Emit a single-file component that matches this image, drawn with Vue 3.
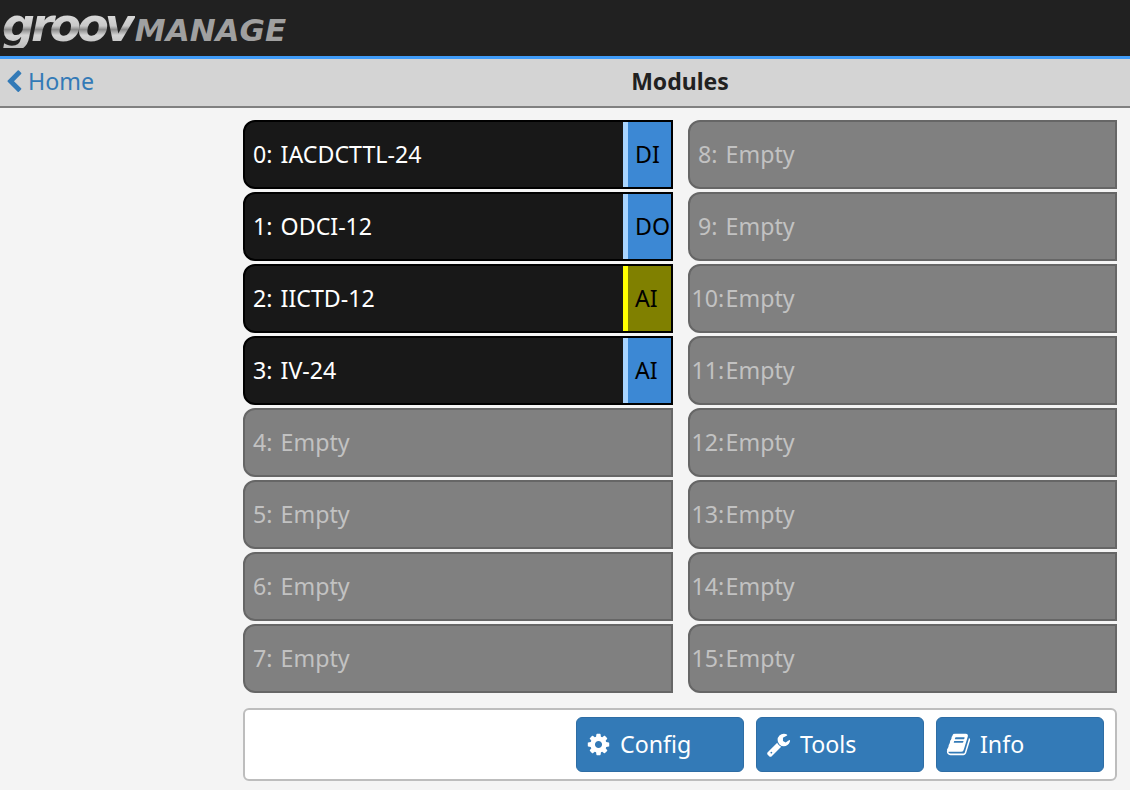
<script setup>
const left = [
  { n: '0:', name: 'IACDCTTL-24', tag: 'DI' },
  { n: '1:', name: 'ODCI-12', tag: 'DO' },
  { n: '2:', name: 'IICTD-12', tag: 'AI', warn: true },
  { n: '3:', name: 'IV-24', tag: 'AI' },
  { n: '4:' }, { n: '5:' }, { n: '6:' }, { n: '7:' }
]
const right = Array.from({ length: 8 }, (_, i) => ({ n: `${i + 8}:` }))
const columns = [left, right]
const cog = 'M1152 896q0-106-75-181t-181-75-181 75-75 181 75 181 181 75 181-75 75-181zm512-109v222q0 12-8 23t-20 13l-185 28q-19 54-39 91 35 50 107 138 10 12 10 25t-9 23q-27 37-99 108t-94 71q-12 0-26-9l-138-108q-44 23-91 38-16 136-29 186-7 28-36 28h-222q-14 0-24.5-8.5t-11.5-21.5l-28-184q-49-16-90-37l-141 107q-10 9-25 9-14 0-25-11-126-114-165-168-7-10-7-23 0-12 8-23 15-21 51-66.5t54-70.5q-27-50-41-99l-183-27q-13-2-21-12.5t-8-23.5v-222q0-12 8-23t19-13l186-28q14-46 39-92-40-57-107-138-10-12-10-24 0-10 9-23 26-36 98.5-107.5t94.5-71.5q13 0 26 10l138 107q44-23 91-38 16-136 29-186 7-28 36-28h222q14 0 24.5 8.5t11.5 21.5l28 184q49 16 90 37l142-107q9-9 24-9 13 0 25 10 129 119 165 170 7 8 7 22 0 12-8 23-15 21-51 66.5t-54 70.5q26 50 41 98l183 28q13 2 21 12.5t8 23.5z'
const wrench = 'M448 1472q0-26-19-45t-45-19-45 19-19 45 19 45 45 19 45-19 19-45zm644-420l-682 682q-37 37-90 37-52 0-91-37l-106-108q-38-36-38-90 0-53 38-91l681-681q39 98 114.5 173.5t173.5 114.5zm634-435q0 39-23 106-47 134-164.5 217.5t-258.5 83.5q-185 0-316.5-131.5t-131.5-316.5 131.5-316.5 316.5-131.5q58 0 121.5 16.5t107.5 46.5q16 11 16 28t-16 28l-293 169v224l193 107q5-3 79-48.5t135.5-81 70.5-35.5q15 0 23.5 10t8.5 25z'
const book = 'M1703 478q40 57 18 129l-275 906q-19 64-76.5 107.5t-122.5 43.5h-923q-77 0-148.5-53.5t-99.5-131.5q-24-67-2-127 0-4 3-27t4-37q1-8-3-21.5t-3-19.5q2-11 8-21t16.5-23.5 16.5-23.5q23-38 45-91.5t30-91.5q3-10 .5-30t-.5-28q3-11 17-28t17-23q21-36 42-92t25-90q1-9-2.5-32t.5-28q4-13 22-30.5t22-22.5q19-26 42.5-84.5t27.5-96.5q1-8-3-25.5t-2-26.5q2-8 9-18t18-23 17-21q8-12 16.5-30.5t15-35 16-36 19.5-32 26.5-23.5 36-11.5 47.5 5.5l-1 3q38-9 51-9h761q74 0 114 56t18 130l-274 906q-36 119-71.5 153.5t-128.5 34.5h-869q-27 0-38 15-11 16-1 43 24 70 144 70h923q29 0 56-15.5t35-41.5l300-987q7-22 5-57 38 15 59 43zm-1064 2q-4 13 2 22.5t20 9.5h608q13 0 25.5-9.5t16.5-22.5l21-64q4-13-2-22.5t-20-9.5h-608q-13 0-25.5 9.5t-16.5 22.5zm-83 256q-4 13 2 22.5t20 9.5h608q13 0 25.5-9.5t16.5-22.5l21-64q4-13-2-22.5t-20-9.5h-608q-13 0-25.5 9.5t-16.5 22.5z'
const buttons = [
  { label: 'Config', d: cog },
  { label: 'Tools', d: wrench },
  { label: 'Info', d: book }
]
</script>

<template>
  <div class="page">
    <header class="top">
      <div class="logo"><span class="groov">groov</span><span class="manage">MANAGE</span></div>
    </header>
    <nav class="nav">
      <a class="home">
        <svg class="chev" viewBox="0 0 1792 1792"><path fill="currentColor" d="M1427 301l-531 531 531 531q19 19 19 45t-19 45l-166 166q-19 19-45 19t-45-19l-742-742q-19-19-19-45t19-45l742-742q19-19 45-19t45 19l166 166q19 19 19 45t-19 45z"/></svg>
        <span class="lift">Home</span>
      </a>
      <h1 class="title lift">Modules</h1>
    </nav>
    <main class="main">
      <div class="grid">
        <div v-for="(col, c) in columns" :key="c" class="col">
          <div v-for="m in col" :key="m.n" class="card" :class="{ on: m.name }">
            <span class="num">{{ m.n }}</span>
            <span class="name">{{ m.name || 'Empty' }}</span>
            <span v-if="m.tag" class="tag" :class="{ warn: m.warn }">{{ m.tag }}</span>
          </div>
        </div>
      </div>
      <div class="bar">
        <button v-for="b in buttons" :key="b.label" class="btn">
          <svg class="ico" viewBox="0 0 1792 1792"><path fill="currentColor" :d="b.d"/></svg>
          <span class="label">{{ b.label }}</span>
        </button>
      </div>
    </main>
  </div>
</template>

<style>
html, body { margin: 0; background: #f4f4f4; }
</style>

<style scoped>
.page {
  width: 1130px;
  height: 790px;
  overflow: hidden;
  background: #f4f4f4;
  font-family: "Noto Sans", "Open Sans", sans-serif;
  font-size: 23.2px;
}
.top {
  height: 56px;
  background: #212121;
  border-bottom: 3px solid #3f9bf8;
  display: flex;
  align-items: center;
  padding-left: 2px;
}
.logo {
  display: flex;
  align-items: baseline;
  font-family: "DejaVu Sans", sans-serif;
  font-style: italic;
  font-weight: 700;
  line-height: 1;
  margin-top: -6px;
}
.groov {
  font-size: 46px;
  letter-spacing: -4px;
  background: linear-gradient(#f0f0f0 0%, #c8c8c8 52%, #8a8a8a 60%, #d4d4d4 72%, #bdbdbd 100%);
  -webkit-background-clip: text;
  background-clip: text;
  color: transparent;
  padding-right: 4px;
}
.manage {
  font-size: 31px;
  color: #a0a0a0;
}
.nav {
  height: 47px;
  background: #d4d4d4;
  border-bottom: 2px solid #808080;
  display: flex;
  align-items: center;
}
.home {
  width: 230px;
  display: flex;
  align-items: center;
  gap: 2px;
  color: #337ab7;
  padding-left: 2px;
  box-sizing: border-box;
}
.chev { width: 24px; height: 24px; margin-bottom: 2px; }
.lift { margin-bottom: 3px; }
.title {
  flex: 1;
  text-align: center;
  margin-top: 0;
  margin-left: 0;
  margin-right: 0;
  font-size: 23px;
  font-weight: 700;
  color: #212121;
}
.main {
  padding: 12px 13px 0 243px;
}
.grid {
  display: grid;
  grid-template-columns: 430px 429px;
  column-gap: 15px;
}
.col {
  display: flex;
  flex-direction: column;
  gap: 3px;
}
.card {
  height: 69px;
  box-sizing: border-box;
  border: 2px solid #666;
  border-radius: 12px 0 0 12px;
  background: #808080;
  color: #c2c2c2;
  display: flex;
  align-items: center;
}
.card.on {
  border-color: #000;
  background: #181818;
  color: #fff;
}
.num {
  width: 35.6px;
  text-align: center;
  flex: none;
  margin-bottom: 2px;
}
.name { flex: 1; margin-bottom: 2px; }
.tag {
  align-self: stretch;
  width: 48px;
  flex: none;
  box-sizing: border-box;
  border-left: 5px solid #a8d4ff;
  background: #3c88d4;
  color: #000;
  display: flex;
  align-items: center;
  padding: 0 0 2px 7px;
  white-space: nowrap;
}
.tag.warn {
  border-left-color: #ff0;
  background: #808000;
}
.bar {
  margin-top: 15px;
  height: 73px;
  box-sizing: border-box;
  border: 2px solid #bdbdbd;
  border-radius: 6px;
  background: #fff;
  display: flex;
  justify-content: flex-end;
  align-items: center;
  gap: 12px;
  padding-right: 11px;
}
.btn {
  width: 168px;
  height: 55px;
  box-sizing: border-box;
  border: 1px solid #2e6da4;
  border-radius: 6px;
  background: #337ab7;
  color: #fff;
  font: inherit;
  display: flex;
  align-items: center;
  gap: 9px;
  padding: 0 0 0 9px;
}
.label { margin-bottom: 2px; }
.ico { width: 25px; height: 25px; flex: none; }
</style>
